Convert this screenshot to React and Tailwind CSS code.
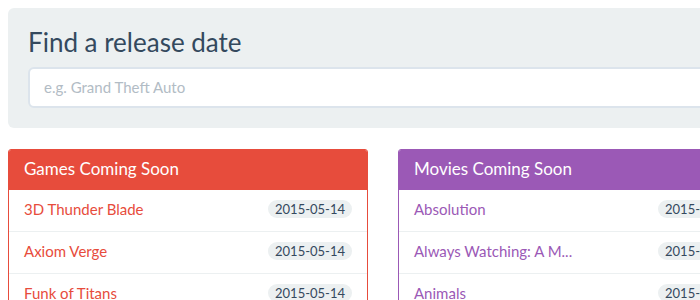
import React from "react";

const games = ["3D Thunder Blade", "Axiom Verge", "Funk of Titans", "Ori and the Blind Forest"];
const movies = ["Absolution", "Always Watching: A M...", "Animals", "Aloha"];

function Panel({ title, items, border, bg, fg }) {
  return (
    <div className={`w-[360px] shrink-0 border rounded-t-[3px] overflow-hidden ${border}`}>
      <div className={`h-[40px] flex items-center px-[15px] pb-[2px] text-white text-[17px] ${bg}`}>{title}</div>
      <div className="bg-white">
        {items.map((it, i) => (
          <div
            key={i}
            className={`flex items-center justify-between px-[15px] pb-[3px] ${i > 0 ? "h-[42px] border-t border-[#ecf0f1]" : "h-[41px]"}`}
          >
            <span className={`text-[15px] ${fg}`}>{it}</span>
            <span className="h-[18px] px-[7px] rounded-full bg-[#ecf0f1] text-[#34495e] text-[13px] leading-[18px]">2015-05-14</span>
          </div>
        ))}
      </div>
    </div>
  );
}

export default function App() {
  return (
    <div className="w-[700px] h-[300px] overflow-hidden bg-white p-2" style={{ fontFamily: "Lato, 'Open Sans', sans-serif" }}>
      <div className="w-[1000px] bg-[#ecf0f1] rounded-[6px] px-5 pt-[19px] pb-5">
        <h1 className="text-[26px] leading-[30px] text-[#34495e] mb-[10px] font-normal">Find a release date</h1>
        <div className="h-[41px] border-2 border-[#dce4ec] rounded-[6px] bg-white flex items-center pl-[14px] text-[15px] text-[#b2bcc5]">
          e.g. Grand Theft Auto
        </div>
      </div>
      <div className="flex gap-[30px] mt-[21px]">
        <Panel title="Games Coming Soon" items={games} border="border-[#e74c3c]" bg="bg-[#e74c3c]" fg="text-[#e74c3c]" />
        <Panel title="Movies Coming Soon" items={movies} border="border-[#9b59b6]" bg="bg-[#9b59b6]" fg="text-[#9b59b6]" />
      </div>
    </div>
  );
}
